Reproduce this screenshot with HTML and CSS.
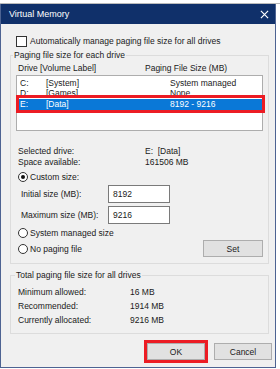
FILE: index.html
```
<!DOCTYPE html>
<html lang="en">
<head>
    <meta charset="UTF-8">
    <title>Virtual Memory</title>
    <link rel="stylesheet" href="styles.css">
</head>
<body>
<div class="strip"></div>
<div class="window">
    <div class="titlebar">
        <span class="titlebar__text">Virtual Memory</span>
        <svg class="titlebar__close" width="9" height="9" viewBox="0 0 10 10">
            <path d="M1 1 L9 9 M9 1 L1 9" stroke="#fff" stroke-width="1.3"/>
        </svg>
    </div>
    <div class="dialog">
        <label class="check">
            <span class="check__box"></span>
            Automatically manage paging file size for all drives
        </label>

        <fieldset class="group group--drives">
            <legend>Paging file size for each drive</legend>
            <div class="cols">
                <span class="col__drive">Drive</span>
                <span class="col__label">[Volume Label]</span>
                <span class="col__size">Paging File Size (MB)</span>
            </div>
            <div class="list">
                <div class="row"><span class="col__drive">C:</span><span class="col__label">[System]</span><span class="col__size">System managed</span></div>
                <div class="row"><span class="col__drive">D:</span><span class="col__label">[Games]</span><span class="col__size">None</span></div>
                <div class="row row--selected"><span class="col__drive">E:</span><span class="col__label">[Data]</span><span class="col__size">8192 - 9216</span></div>
                <div class="highlight"></div>
            </div>

            <div class="info">
                <div class="info__row"><span class="info__key">Selected drive:</span><span>E:&nbsp; [Data]</span></div>
                <div class="info__row"><span class="info__key">Space available:</span><span>161506 MB</span></div>
            </div>

            <label class="radio radio--custom"><span class="radio__dot radio__dot--on"></span>Custom size:</label>
            <div class="field"><span class="field__label">Initial size (MB):</span><span class="field__input">8192</span></div>
            <div class="field"><span class="field__label">Maximum size (MB):</span><span class="field__input">9216</span></div>
            <div class="options">
                <div class="options__radios">
                    <label class="radio"><span class="radio__dot"></span>System managed size</label>
                    <label class="radio"><span class="radio__dot"></span>No paging file</label>
                </div>
                <button class="btn btn--set">Set</button>
            </div>
        </fieldset>

        <fieldset class="group group--total">
            <legend>Total paging file size for all drives</legend>
            <div class="total__row"><span class="total__key">Minimum allowed:</span><span>16 MB</span></div>
            <div class="total__row"><span class="total__key">Recommended:</span><span>1914 MB</span></div>
            <div class="total__row"><span class="total__key">Currently allocated:</span><span>9216 MB</span></div>
        </fieldset>

        <div class="footer">
            <button class="btn btn--ok">OK</button>
            <button class="btn">Cancel</button>
        </div>
    </div>
</div>
</body>
</html>
```

FILE: styles.css
```
body, html {
    margin: 0;
    background-color: #fff;
    font-family: "Liberation Sans", Arial, sans-serif;
    font-size: 8.5px;
    color: #1a1a1a;
    white-space: nowrap;
}

.strip {
    height: 3px;
    background-color: #fff;
    border-bottom: 1px solid #bbb;
}

.window {
    width: 276px;
    height: 364px;
    border: 1px solid #4d6392;
    border-top: none;
    box-sizing: border-box;
    background-color: #f0f0f0;
    display: flex;
    flex-direction: column;
}

.titlebar {
    height: 20px;
    background-color: #10306a;
    color: #fff;
    display: flex;
    align-items: center;
    justify-content: space-between;
    padding: 0 6px 0 8px;
    flex-shrink: 0;
}

.titlebar__text {
    font-size: 9px;
}

.dialog {
    flex: 1;
    padding: 10px 6px 0 9px;
    display: flex;
    flex-direction: column;
}

.check {
    display: flex;
    align-items: center;
    gap: 3px;
    height: 14px;
    padding-left: 6px;
}

.check__box {
    width: 9px;
    height: 9px;
    border: 1px solid #333;
    background-color: #fff;
}

.group {
    margin: 0;
    border: 1px solid #dcdcdc;
    padding: 0 5px 0 5px;
}

.group legend {
    padding: 0 1px;
    margin-left: -3px;
}

.group--drives {
    margin-top: 2px;
    height: 214px;
    box-sizing: border-box;
}

.cols, .row {
    display: flex;
    height: 10px;
    line-height: 10px;
}

.cols {
    margin-top: 3px;
    padding-left: 2px;
}

.col__drive {
    width: 26px;
}

.col__label {
    width: 124px;
}

.cols .col__drive {
    width: 22px;
}

.cols .col__label {
    width: 105px;
}

.list {
    position: relative;
    margin-top: 2px;
    height: 56px;
    background-color: #fff;
    border: 1px solid #adadad;
    padding: 2px 0 0 3px;
    box-sizing: border-box;
}

.row--selected {
    background-color: #0a78d7;
    color: #fff;
    margin-left: -3px;
    padding-left: 3px;
    height: 11px;
    line-height: 11px;
    margin-top: 1px;
}

.highlight {
    position: absolute;
    left: -1px;
    right: -3px;
    top: 19px;
    height: 12px;
    border: 3px solid #ec1c24;
}

.info {
    margin-top: 15px;
    padding-left: 2px;
}

.info__row, .total__row {
    display: flex;
    height: 11px;
    line-height: 11px;
}

.info__key {
    width: 127px;
}

.radio {
    display: flex;
    align-items: center;
    gap: 2px;
    height: 14px;
}

.radio__dot {
    width: 10px;
    height: 10px;
    border: 1px solid #333;
    border-radius: 50%;
    background-color: #fff;
    box-sizing: border-box;
    position: relative;
}

.radio__dot--on::after {
    content: "";
    position: absolute;
    left: 2px;
    top: 2px;
    width: 4px;
    height: 4px;
    border-radius: 50%;
    background-color: #111;
}

.radio--custom {
    margin-top: 3px;
    height: 12px;
    padding-left: 2px;
}

.field {
    display: flex;
    align-items: center;
    height: 21px;
    padding-left: 5px;
}

.field__label {
    width: 87px;
}

.field__input {
    width: 62px;
    height: 18px;
    line-height: 16px;
    border: 1px solid #7a7a7a;
    background-color: #fff;
    padding-left: 4px;
    box-sizing: border-box;
}

.options {
    display: flex;
    justify-content: space-between;
    align-items: flex-end;
    margin-top: 0;
    padding-left: 2px;
}

.options__radios .radio {
    height: 16px;
}

.btn {
    font-family: inherit;
    font-size: 8.5px;
    color: #1a1a1a;
    width: 58px;
    height: 17px;
    padding: 0;
    border: 1px solid #adadad;
    background-color: #e1e1e1;
}

.btn--set {
    width: 60px;
    margin-bottom: 0;
}

.group--total {
    margin-top: 6px;
    height: 64px;
    box-sizing: border-box;
    padding-top: 5px;
    padding-left: 7px;
}

.total__row {
    height: 14px;
    line-height: 14px;
}

.total__key {
    width: 112px;
}

.footer {
    display: flex;
    justify-content: flex-end;
    gap: 9px;
    margin-top: 9px;
    margin-right: -3px;
}

.btn--ok {
    outline: 3px solid #ec1c24;
    outline-offset: 0;
}
```
